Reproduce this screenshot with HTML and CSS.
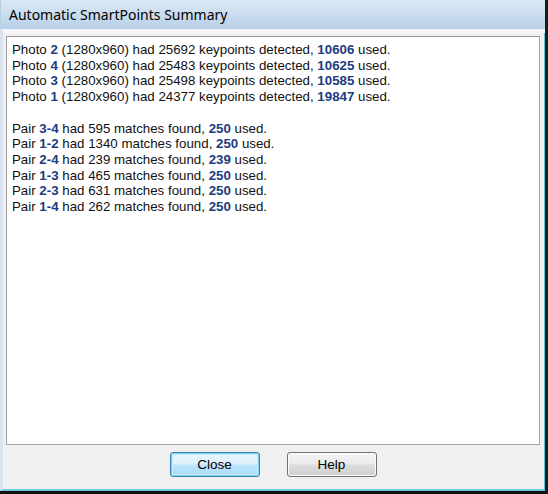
FILE: index.html
```html
<!DOCTYPE html>
<html>
<head>
<meta charset="utf-8">
<link rel="stylesheet" href="styles.css">
</head>
<body>
<div class="frame">
  <div class="titlebar">Automatic SmartPoints Summary</div>
  <div class="titleshine"></div>
  <div class="body">
    <div class="textbox">
      <div>Photo <b>2</b> (1280x960) had 25692 keypoints detected, <b>10606</b> used.</div>
      <div>Photo <b>4</b> (1280x960) had 25483 keypoints detected, <b>10625</b> used.</div>
      <div>Photo <b>3</b> (1280x960) had 25498 keypoints detected, <b>10585</b> used.</div>
      <div>Photo <b>1</b> (1280x960) had 24377 keypoints detected, <b>19847</b> used.</div>
      <div class="blank">&nbsp;</div>
      <div>Pair <b>3-4</b> had 595 matches found, <b>250</b> used.</div>
      <div>Pair <b>1-2</b> had 1340 matches found, <b>250</b> used.</div>
      <div>Pair <b>2-4</b> had 239 matches found, <b>239</b> used.</div>
      <div>Pair <b>1-3</b> had 465 matches found, <b>250</b> used.</div>
      <div>Pair <b>2-3</b> had 631 matches found, <b>250</b> used.</div>
      <div>Pair <b>1-4</b> had 262 matches found, <b>250</b> used.</div>
    </div>
    <div class="buttons">
      <button class="btn default">Close</button>
      <button class="btn">Help</button>
    </div>
  </div>
</div>
</body>
</html>
```
FILE: styles.css
```css
html, body {
  margin: 0;
  padding: 0;
  background: #111;
}
.frame {
  width: 548px;
  height: 494px;
  box-sizing: border-box;
  display: flex;
  flex-direction: column;
  border-right: 3px solid #1b1b1b;
  border-bottom: 3px solid #111;
  background: #f0f0f0;
}
.titlebar {
  height: 29px;
  flex: none;
  display: flex;
  align-items: center;
  padding-left: 8px;
  background: linear-gradient(#dbe8f5, #c6daee 60%, #b7cfe8);
  font-family: "Noto Sans", "Open Sans", sans-serif;
  font-size: 14px;
  color: #000;
  border-left: 1px solid #b9cde2;
}
.titleshine {
  height: 4px;
  flex: none;
  background: #f8f5f9;
  border-left: 3px solid #dbe4ee;
}
.body {
  flex: 1;
  display: flex;
  flex-direction: column;
  padding: 3px 4px 0 3px;
  border-left: 3px solid #dbe4ee;
  border-right: 1px solid #5fc4d6;
  border-bottom: 2px solid #6ccadb;
}
.textbox {
  height: 402px;
  flex: none;
  background: #fff;
  border: 1px solid #a3a3a3;
  border-top-color: #9a9a9a;
  padding: 5px 5px 0 5px;
  font-family: "Liberation Sans", Arial, sans-serif;
  font-size: 13.3px;
  line-height: 15.7px;
  color: #111;
}
.textbox b {
  color: #1d3b80;
  font-weight: bold;
}
.buttons {
  display: flex;
  justify-content: center;
  gap: 27px;
  padding-top: 7px;
}
.btn {
  width: 90px;
  height: 25px;
  box-sizing: border-box;
  border: 1px solid #707070;
  border-radius: 3px;
  background: linear-gradient(#f4f4f4, #ebebeb 48%, #dddddd 52%, #cfcfcf);
  font-family: "Liberation Sans", Arial, sans-serif;
  font-size: 13.5px;
  color: #000;
  padding: 0;
  box-shadow: inset 0 0 0 1px #fbfbfb;
}
.btn.default {
  border-color: #3c7fb1;
  box-shadow: inset 0 0 0 1px #7fd3f1, inset 0 0 0 2px #c8ecfa;
  background: linear-gradient(#eaf6fd, #d9f0fc 48%, #bee6fd 52%, #a7d9f5);
}
```
